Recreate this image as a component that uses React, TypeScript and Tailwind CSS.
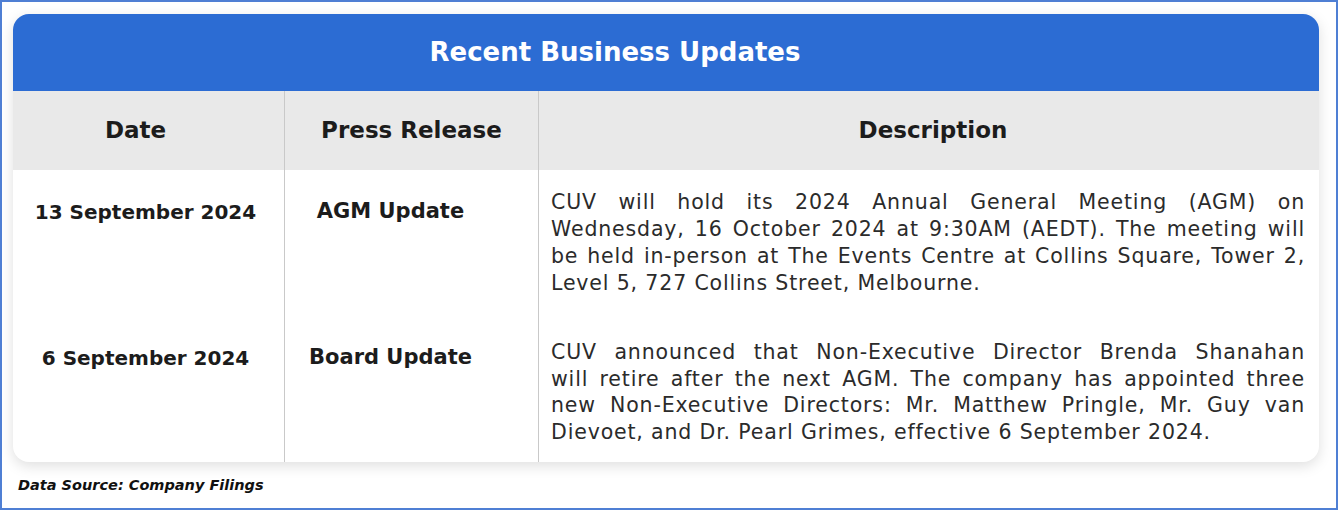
import React from "react";

const font = { fontFamily: '"DejaVu Sans", "Noto Sans", sans-serif' };

function JLines({ lines }: { lines: string[] }) {
  return (
    <div>
      {lines.map((l, i) => (
        <div
          key={i}
          className={
            i < lines.length - 1
              ? "text-justify [text-align-last:justify] whitespace-nowrap"
              : "text-left whitespace-nowrap"
          }
        >
          {l}
        </div>
      ))}
    </div>
  );
}

export default function App() {
  return (
    <div
      className="w-[1338px] h-[510px] border-2 border-[#4f7fd4] bg-white box-border flex flex-col"
      style={font}
    >
      <div className="w-[1306px] ml-[11px] mt-[12px] rounded-[16px] overflow-hidden bg-white shadow-[0_4px_14px_rgba(0,0,0,0.13)]">
        <div className="h-[77px] bg-[#2c6cd3] flex items-center justify-center pr-[102px]">
          <span className="text-white font-bold text-[26px]">Recent Business Updates</span>
        </div>
        <div className="grid grid-cols-[271px_254px_1fr]">
          <div className="h-[79px] bg-[#e9e9e9] flex items-center justify-center pr-[26px] text-[23px] font-bold text-[#1c1c1c]">
            Date
          </div>
          <div className="h-[79px] bg-[#e9e9e9] border-l border-[#c9c9c9] flex items-center justify-center text-[23px] font-bold text-[#1c1c1c]">
            Press Release
          </div>
          <div className="h-[79px] bg-[#e9e9e9] border-l border-[#c9c9c9] flex items-center justify-center pl-[8px] text-[23px] font-bold text-[#1c1c1c]">
            Description
          </div>

          <div className="h-[148px] pt-[27px] text-center pr-[6px] text-[20px] font-bold text-[#1c1c1c]">
            13 September 2024
          </div>
          <div className="h-[148px] pt-[26px] border-l border-[#c9c9c9] text-center pr-[42px] text-[21px] font-bold text-[#1c1c1c]">
            AGM Update
          </div>
          <div className="h-[148px] pt-[19px] border-l border-[#c9c9c9] pl-[12px] pr-[14px] text-[20.5px] tracking-[0.85px] leading-[27px] text-[#2b2b2b]">
            <JLines
              lines={[
                "CUV will hold its 2024 Annual General Meeting (AGM) on",
                "Wednesday, 16 October 2024 at 9:30AM (AEDT). The meeting will",
                "be held in-person at The Events Centre at Collins Square, Tower 2,",
                "Level 5, 727 Collins Street, Melbourne.",
              ]}
            />
          </div>

          <div className="h-[144px] pt-[25px] text-center pr-[6px] text-[20px] font-bold text-[#1c1c1c]">
            6 September 2024
          </div>
          <div className="h-[144px] pt-[24px] border-l border-[#c9c9c9] text-center pr-[42px] text-[21px] font-bold text-[#1c1c1c]">
            Board Update
          </div>
          <div className="h-[144px] pt-[21px] border-l border-[#c9c9c9] pl-[12px] pr-[14px] text-[20.5px] tracking-[0.85px] leading-[26.5px] text-[#2b2b2b]">
            <JLines
              lines={[
                "CUV announced that Non-Executive Director Brenda Shanahan",
                "will retire after the next AGM. The company has appointed three",
                "new Non-Executive Directors: Mr. Matthew Pringle, Mr. Guy van",
                "Dievoet, and Dr. Pearl Grimes, effective 6 September 2024.",
              ]}
            />
          </div>
        </div>
      </div>
      <div className="ml-[16px] mt-[13px] text-[14.5px] font-bold italic text-[#111]">Data Source: Company Filings</div>
    </div>
  );
}
